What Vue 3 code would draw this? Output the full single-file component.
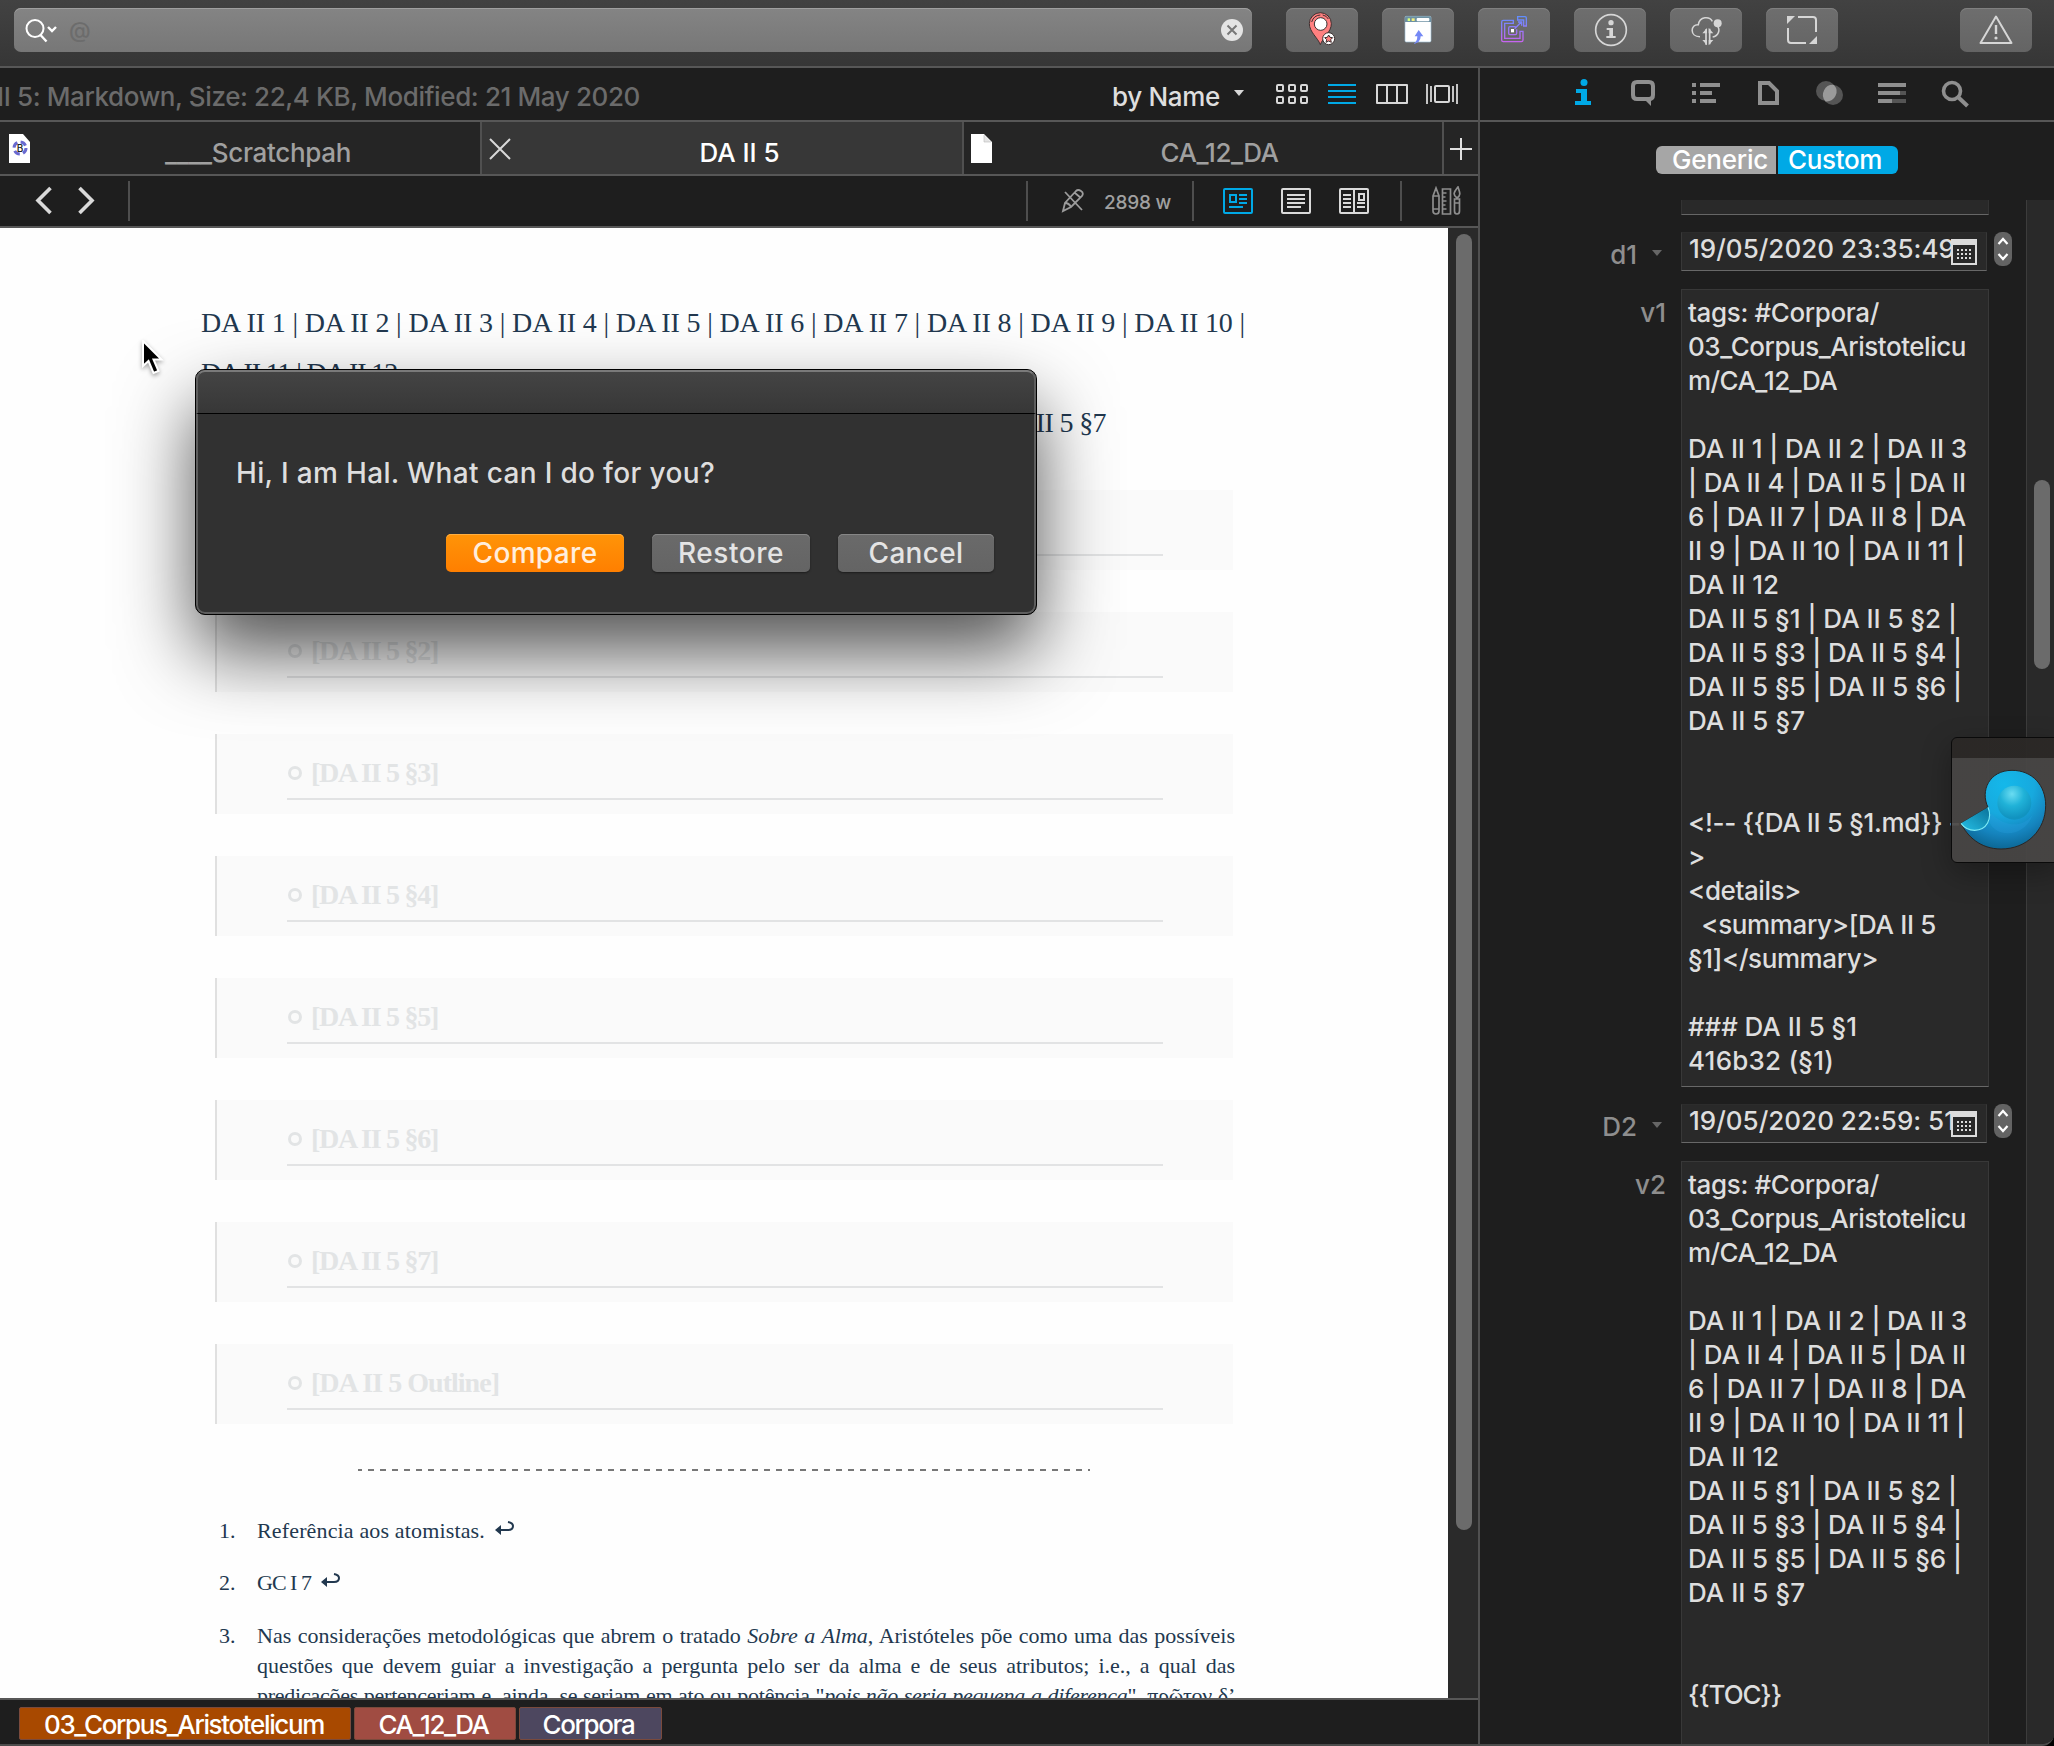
<script setup>
// Spreads the tracking of a text so that it takes up the given width.
const vFit = {
  mounted(el, { value }) {
    if (!value) return
    const count = [...el.textContent].length
    const natural = el.getBoundingClientRect().width
    el.style.letterSpacing = `${((value - natural) / count).toFixed(3)}px`
  },
}

const header = [
  ['tags: #Corpora/', 191],
  ['03_Corpus_Aristotelicu', 278],
  ['m/CA_12_DA', 149],
  ['', 0],
  ['DA II 1 | DA II 2 | DA II 3', 279],
  ['| DA II 4 | DA II 5 | DA II', 278],
  ['6 | DA II 7 | DA II 8 | DA', 278],
  ['II 9 | DA II 10 | DA II 11 |', 277],
  ['DA II 12', 91],
  ['DA II 5 §1 | DA II 5 §2 |', 269],
  ['DA II 5 §3 | DA II 5 §4 |', 274],
  ['DA II 5 §5 | DA II 5 §6 |', 274],
  ['DA II 5 §7', 117],
  ['', 0],
  ['', 0],
]

const records = [
  {
    date: 'd1',
    value: '19/05/2020 23:35:49',
    label: 'v1',
    lines: [
      ...header,
      ['<!-- {{DA II 5 §1.md}} --', 284],
      ['>', 0],
      ['<details>', 113],
      ['  <summary>[DA II 5', 248],
      ['§1]</summary>', 190],
      ['', 0],
      ['### DA II 5 §1', 169],
      ['416b32 (§1)', 146],
    ],
  },
  {
    date: 'D2',
    value: '19/05/2020 22:59: 51',
    label: 'v2',
    lines: [...header, ['{{TOC}}', 93]],
  },
]

const sections = ['§1', '§2', '§3', '§4', '§5', '§6', '§7', 'Outline']
</script>

<template>
  <div class="window">
    <header class="toolbar">
      <div class="search">
        <svg class="glass" width="34" height="26" viewBox="0 0 34 26" fill="none" stroke="#fff">
          <ellipse cx="11" cy="10.500" rx="8.500" ry="8.500" stroke-width="2" />
          <path d="M16.500 17l6 6.500" stroke-width="2.4" />
          <path d="M24 9l4 4 4-4" stroke-width="2.4" />
        </svg>
        <span class="at">@</span>
        <svg class="clear" width="22" height="22" viewBox="0 0 22 22">
          <circle cx="11" cy="11" r="11" fill="#e4e4e4" />
          <path d="M6.5 6.5l9 9M15.5 6.5l-9 9" stroke="#777" stroke-width="2" />
        </svg>
      </div>
      <div class="tool">
        <svg width="72" height="44" viewBox="0 0 216 132">
          <path d="M103 110C96 90 70 72 70 47a33 33 0 0 1 66 0c0 25-26 43-33 63z" fill="#ff8080" stroke="#3c3030" stroke-width="3" />
          <path d="M77 42q6-20 26-21M110 21q12 2 17 12" stroke="#3c3030" stroke-width="3" fill="none" />
          <circle cx="104" cy="48" r="19" fill="#fff" stroke="#3c3030" stroke-width="3" />
          <circle cx="128" cy="92" r="18" fill="#fff" stroke="#3c3030" stroke-width="3" />
          <path d="M128 81l4 7 8 1-6 6 2 8-8-4-8 4 2-8-6-6 8-1z" fill="#ff8080" stroke="#3c3030" stroke-width="3" />
        </svg>
      </div>
      <div class="tool">
        <svg width="72" height="44" viewBox="0 0 216 132">
          <rect x="69" y="25" width="78" height="77" rx="4" fill="#fff" stroke="#9fc0d4" stroke-width="2" />
          <path d="M69 42V29q0-4 4-4h70q4 0 4 4v13z" fill="#6d91a3" />
          <path d="M77 31h7v8h-7z" fill="#d9ff80" />
          <path d="M89 31h9v8h-9z" fill="#f5f080" />
          <rect x="104" y="30" width="38" height="10" rx="3" fill="#fff" />
          <path d="M110 66l14 19h-8q0 20-23 23 13-6 13-23h-8z" fill="#7589f5" />
        </svg>
      </div>
      <div class="tool">
        <svg width="72" height="44" viewBox="0 0 216 132" fill="none" stroke="url(#link)" stroke-width="4">
          <defs>
            <linearGradient id="link" gradientUnits="userSpaceOnUse" x1="0" y1="24" x2="0" y2="102">
              <stop offset="0" stop-color="#5f8fff" />
              <stop offset="1" stop-color="#c864f0" />
            </linearGradient>
          </defs>
          <path d="M106 37H76q-5 0-5 5v54q0 5 5 5h54q5 0 5-5V70h-9v21H80V46h26z" />
          <path d="M113 56H96q-4 0-4 4v16q0 4 4 4h16q4 0 4-4V64M110 62l20-20M120 42h11v11" />
          <path d="M119 26h22q4 0 4 4v24h-8V36h-18z" />
          <path d="M99 63h9v10h-9z" fill="#fff" stroke="none" />
        </svg>
      </div>
      <div class="tool">
        <svg width="72" height="44" viewBox="0 0 216 132">
          <circle cx="111" cy="66" r="46" fill="none" stroke="#d6d6d6" stroke-width="5" />
          <circle cx="111" cy="44" r="8" fill="#d6d6d6" />
          <path d="M98 60h19v24h8v6H97v-6h9V66h-8z" fill="#d6d6d6" />
        </svg>
      </div>
      <div class="tool">
        <svg width="72" height="44" viewBox="0 0 216 132" fill="none" stroke="#d6d6d6" stroke-width="4.5">
          <path d="M90 86c-32 0-29-38-5-36 4-26 34-26 42-10M142 54c10 12 3 30-14 33" />
          <circle cx="143" cy="46" r="12" fill="#d6d6d6" stroke="none" />
          <path d="M108 110V64M119 62v47" stroke-width="5" />
          <path d="M97 76l14-16v16zM130 96l-14 16V96zM97 96l14 16V96zM130 76l-14-16v16z" fill="#d6d6d6" stroke="none" />
        </svg>
      </div>
      <div class="tool">
        <svg width="72" height="44" viewBox="0 0 72 44" fill="none" stroke="#d6d6d6" stroke-width="2">
          <path d="M32 9h15q3 0 3 3v12M40 35H25q-3 0-3-3V20" />
          <path d="M21 16V8h8zM51 28v8h-8z" fill="#d6d6d6" stroke="none" />
        </svg>
      </div>
      <div class="tool last">
        <svg width="72" height="44" viewBox="0 0 72 44" fill="none" stroke="#d6d6d6" stroke-width="2">
          <path d="M36 8.5L51.5 35h-31z" stroke-linejoin="round" />
          <path d="M36 17v9" stroke-width="2.4" />
          <circle cx="36" cy="30" r="1.6" fill="#d6d6d6" stroke="none" />
        </svg>
      </div>
    </header>

    <div class="body">
      <main class="viewer">
        <div class="status">
          <span v-fit="643" class="info">II 5: Markdown, Size: 22,4 KB, Modified: 21 May 2020</span>
          <span v-fit="108" class="sort">by Name</span>
          <svg class="views" width="228" height="26" viewBox="0 0 228 26" fill="none" stroke="#d8d8d8" stroke-width="2">
            <path d="M4 9h10l-5 6z" fill="#d8d8d8" stroke="none" />
            <g>
              <rect x="47" y="4" width="6" height="6" rx="1" /><rect x="59" y="4" width="6" height="6" rx="1" /><rect x="71" y="4" width="6" height="6" rx="1" />
              <rect x="47" y="16" width="6" height="6" rx="1" /><rect x="59" y="16" width="6" height="6" rx="1" /><rect x="71" y="16" width="6" height="6" rx="1" />
            </g>
            <path d="M98 4h28M98 10h28M98 16h28M98 22h28" stroke="#00a9e6" />
            <path d="M147 4h30v18h-30zM157 4v18M167 4v18" stroke-linejoin="round" />
            <path d="M197 3v20M201 5v16M223 5v16M227 3v20" stroke-width="1.8" />
            <rect x="205" y="5" width="14" height="16" rx="1" />
          </svg>
        </div>

        <nav class="tabs">
          <div class="tab first">
            <svg width="24" height="30" viewBox="0 0 24 30">
              <path d="M1 0h14l7 8v21H1z" fill="#fff" />
              <circle cx="12" cy="14" r="6" fill="none" stroke="#6a6ad0" stroke-width="3" stroke-dasharray="6 3.400" />
              <text x="12" y="18" font-size="10" text-anchor="middle" fill="#222">B</text>
            </svg>
            <span v-fit="186" class="name">____Scratchpah</span>
          </div>
          <div class="tab active">
            <svg width="24" height="30" viewBox="0 0 24 30"><path d="M2 5l20 20M22 5L2 25" stroke="#d8d8d8" stroke-width="2" /></svg>
            <span v-fit="80" class="name">DA II 5</span>
          </div>
          <div class="tab third">
            <svg width="24" height="30" viewBox="0 0 24 30"><path d="M1 0h13l8 8v21H1z" fill="#fff" /><path d="M14 1v7h7" fill="#e4e4e4" stroke="#bbb" stroke-width=".6" /></svg>
            <span v-fit="118" class="name">CA_12_DA</span>
          </div>
          <div class="plus">
            <svg width="24" height="24" viewBox="0 0 24 24"><path d="M12 1v22M1 12h22" stroke="#e0e0e0" stroke-width="2" /></svg>
          </div>
        </nav>

        <div class="editbar">
          <svg class="arrows" width="128" height="40" viewBox="0 0 128 40" fill="none" stroke="#dadada" stroke-width="3.6">
            <path d="M50.5 7L38 19.500l12.500 12.500M79.500 7L92 19.500 79.500 32" />
          </svg>
          <i class="rule"></i>
          <i class="rule push"></i>
          <svg class="pen" width="24" height="26" viewBox="0 0 24 26" fill="none" stroke="#9c9c9c" stroke-width="1.8">
            <path d="M2 23l2-8L15 3q2-2 5 0 3 2 1 5L10 19zM4 15q4 0 6 4M14 5l6 5M4 4l17 18" />
          </svg>
          <span v-fit="67" class="words">2898 w</span>
          <i class="rule"></i>
          <svg class="modes" width="146" height="28" viewBox="0 0 146 28" fill="none" stroke="#dadada" stroke-width="2">
            <g stroke="#00a9e6">
              <rect x="1" y="2" width="28" height="24" rx="1" /><rect x="7" y="8" width="6" height="7" />
              <path d="M16 8h8M16 12h8M16 16h8M6 20h14" />
            </g>
            <rect x="59" y="2" width="28" height="24" rx="1" /><path d="M64 8h18M64 12h18M64 16h18M64 20h14" />
            <rect x="117" y="2" width="28" height="24" rx="1" /><path d="M131 2v24M120 8h8M120 12h8M120 16h8M120 20h8M134 16h8M134 20h8" /><rect x="136" y="7" width="5" height="6" />
          </svg>
          <i class="rule"></i>
          <svg class="kit" width="30" height="30" viewBox="0 0 30 30" fill="none" stroke="#8e8e8e" stroke-width="1.7">
            <path d="M2 10l3-8 3 8v15q0 3-3 3t-3-3zM2 10h6M2 23h6M11.500 3h8v25h-8zM11.500 7h4M11.500 11h3M11.500 15h4M11.500 19h3M11.500 23h4" />
            <path d="M26 12c-6-4-1-8 1-11 1 4 4 8-1 11M23.500 13h5v12q0 3-2.500 3t-2.500-3zM23 17h6" />
          </svg>
        </div>

        <div class="pane">
          <article class="page">
            <div class="links">
              <p><span v-fit="1044">DA II 1 | DA II 2 | DA II 3 | DA II 4 | DA II 5 | DA II 6 | DA II 7 | DA II 8 | DA II 9 | DA II 10 |</span></p>
              <p><span v-fit="196">DA II 11 | DA II 12</span></p>
              <p><span v-fit="905">DA II 5 §1 | DA II 5 §2 | DA II 5 §3 | DA II 5 §4 | DA II 5 §5 | DA II 5 §6 | DA II 5 §7</span></p>
            </div>
            <section v-for="s in sections" :key="s" class="fold">
              <div class="summary"><i></i><span v-fit="s === 'Outline' ? 188 : 127">[DA II 5 {{ s }}]</span></div>
            </section>
            <div class="dashes"></div>
            <ol class="notes">
              <li>
                <b>1.</b>
                <div>
                  <span v-fit="228">Referência aos atomistas.</span>
                  <svg width="20" height="16" viewBox="0 0 20 16"><path d="M0 9l6-5v10zM5 8h2v2H5z" fill="#22384f" /><path d="M4 9h9q5 0 5-4 0-3-5-4" fill="none" stroke="#22384f" stroke-width="2" /></svg>
                </div>
              </li>
              <li>
                <b>2.</b>
                <div>
                  <span v-fit="54">GC I 7</span>
                  <svg width="20" height="16" viewBox="0 0 20 16"><path d="M0 9l6-5v10zM5 8h2v2H5z" fill="#22384f" /><path d="M4 9h9q5 0 5-4 0-3-5-4" fill="none" stroke="#22384f" stroke-width="2" /></svg>
                </div>
              </li>
              <li>
                <b>3.</b>
                <div class="para">
                  <p>Nas considerações metodológicas que abrem o tratado <em>Sobre a Alma</em>, Aristóteles põe como uma das possíveis</p>
                  <p>questões que devem guiar a investigação a pergunta pelo ser da alma e de seus atributos; i.e., a qual das</p>
                  <p class="tight">predicações pertenceriam e, ainda, se seriam em ato ou potência "<em>pois não seria pequena a diferença</em>", πρῶτον δ’</p>
                </div>
              </li>
            </ol>
          </article>
          <div class="track"><div class="thumb"></div></div>
        </div>

        <footer class="tags">
          <span class="t1"><em v-fit="280">03_Corpus_Aristotelicum</em></span>
          <span class="t2"><em v-fit="110">CA_12_DA</em></span>
          <span class="t3"><em v-fit="92">Corpora</em></span>
        </footer>
      </main>

      <aside class="inspector">
        <div class="kinds">
          <svg width="62" height="30" viewBox="0 0 62 30" fill="#00a9e6"><circle cx="31" cy="4.500" r="3.500" /><path d="M23 11h11v12h4v4H22v-4h6v-8h-5z" /></svg>
          <svg width="62" height="30" viewBox="0 0 62 30"><path d="M22 4h12q4 0 4 4v9q0 4-4 4H22q-4 0-4-4V8q0-4 4-4z" fill="none" stroke="#8f8f8f" stroke-width="4" /><path d="M29 21h7v7z" fill="#8f8f8f" /></svg>
          <svg width="62" height="30" viewBox="0 0 62 30" stroke="#8f8f8f" stroke-width="4"><path d="M15 7h4M23 7h20M15 15h4M23 15h12M15 23h4M23 23h16" /></svg>
          <svg width="62" height="30" viewBox="0 0 62 30"><path d="M21 5h9l8 8v12H21z" fill="none" stroke="#8f8f8f" stroke-width="4" /></svg>
          <svg width="62" height="30" viewBox="0 0 62 30"><circle cx="25" cy="13" r="10" fill="#555" /><circle cx="32" cy="17" r="10" fill="#555" /><path d="M24.500 23.500A10 10 0 0 1 33 6.900 10 10 0 0 1 24.500 23.500" fill="#9a9a9a" /></svg>
          <svg width="62" height="30" viewBox="0 0 62 30" stroke="#8f8f8f" stroke-width="4"><path d="M15 7h28M15 15h22M15 23h14" /><path d="M37 15h6M29 23h14" stroke="#555" /></svg>
          <svg width="62" height="30" viewBox="0 0 62 30" fill="none" stroke="#8f8f8f"><circle cx="27" cy="13" r="8.500" stroke-width="3.600" /><path d="M33 19l9.500 9" stroke-width="4" /></svg>
        </div>
        <div class="segment">
          <span><em v-fit="96">Generic</em></span>
          <span class="on"><em v-fit="94">Custom</em></span>
        </div>
        <div class="scroll">
          <div class="records">
            <div class="stub"></div>
            <template v-for="r in records" :key="r.label">
              <div class="row date">
                <label>{{ r.date }}<i class="caret"></i></label>
                <div class="field">
                  <span v-fit="266">{{ r.value }}</span>
                  <svg class="cal" width="26" height="26" viewBox="0 0 26 26">
                    <rect x="1" y="1" width="24" height="24" fill="#292929" stroke="#dcdcdc" stroke-width="2" />
                    <path d="M0 0h26v6H0z" fill="#dcdcdc" />
                    <path d="M6 11h15M6 15h15M6 19h15" stroke="#dcdcdc" stroke-width="2" stroke-dasharray="2 2" />
                  </svg>
                </div>
                <svg class="stepper" width="18" height="34" viewBox="0 0 18 34">
                  <rect width="18" height="34" rx="8" fill="#636363" />
                  <path d="M4.500 12L9 7l4.500 5M4.500 22L9 27l4.500-5" fill="none" stroke="#fff" stroke-width="2.200" />
                </svg>
              </div>
              <div class="row text">
                <label>{{ r.label }}</label>
                <div class="field">
                  <div v-for="(l, i) in r.lines" :key="i" class="line"><span v-fit="l[1]">{{ l[0] }}</span></div>
                </div>
              </div>
            </template>
          </div>
          <div class="track"><div class="thumb"></div></div>
        </div>
      </aside>
    </div>

    <div class="dialog">
      <div class="bar"></div>
      <p><span v-fit="479">Hi, I am Hal. What can I do for you?</span></p>
      <div class="actions">
        <button class="primary"><span v-fit="125">Compare</span></button>
        <button class="b2"><span v-fit="106">Restore</span></button>
        <button class="b3"><span v-fit="95">Cancel</span></button>
      </div>
    </div>

    <div class="dock">
      <svg width="103" height="126" viewBox="35 37 309 378">
        <defs>
          <radialGradient id="outer" gradientUnits="userSpaceOnUse" cx="195" cy="180" r="200">
            <stop offset="0" stop-color="#14b8ea" /><stop offset=".45" stop-color="#17a9de" /><stop offset=".75" stop-color="#1583bd" /><stop offset="1" stop-color="#0b638f" />
          </radialGradient>
          <radialGradient id="inner" gradientUnits="userSpaceOnUse" cx="218" cy="208" r="72">
            <stop offset="0" stop-color="#6adcf2" /><stop offset=".5" stop-color="#20b2d8" /><stop offset="1" stop-color="#1193c0" />
          </radialGradient>
          <linearGradient id="mouth" x1="1" y1="0" x2="0" y2="1">
            <stop offset="0" stop-color="#0a7299" /><stop offset="1" stop-color="#25bfe6" />
          </linearGradient>
        </defs>
        <path d="M65 296L146 248C122 198 150 137 218 137c62 0 101 46 101 105 0 74-56 131-134 131-62 0-101-38-120-77z" fill="url(#outer)" stroke="#2a2624" stroke-width="3" />
        <path d="M150 292c22 50 106 46 130-22-25 34-76 45-126-5z" fill="#2a9fe0" opacity=".3" />
        <circle cx="225" cy="234" r="51" fill="url(#inner)" />
        <path d="M65 296L146 248c14 34-4 68-40 69-20 0-33-10-41-21z" fill="url(#mouth)" />
        <path d="M146 248c14 34-4 68-40 69-20 0-33-10-41-21" fill="none" stroke="#7deaf4" stroke-width="3.500" />
      </svg>
    </div>

    <svg class="cursor" width="26" height="36" viewBox="0 0 26 36">
      <path d="M2 1v25l5.500-5 5 12 5-2-5-11.500h8z" fill="#000" stroke="#fff" stroke-width="2" />
    </svg>
  </div>
</template>

<style>
html,
body {
  margin: 0;
  background: #000;
}
</style>

<style scoped>
.window {
  position: relative;
  display: flex;
  flex-direction: column;
  box-sizing: border-box;
  width: 2054px;
  height: 1746px;
  overflow: hidden;
  border-bottom: 2px solid #4c4c4c;
  border-bottom-right-radius: 12px;
  background: #1e1e1e;
  color: #dedede;
  font: 450 26px/34px Inter, "Liberation Sans", sans-serif;
}
.window * { box-sizing: border-box; }
svg { display: block; flex: none; }
span, em { white-space: pre; }
p { margin: 0; }
.toolbar {
  display: flex;
  flex: none;
  height: 68px;
  padding: 8px 22px 0 14px;
  gap: 24px;
  border-bottom: 2px solid #575757;
  background: linear-gradient(#424242, #363636);
}
.search {
  display: flex;
  align-items: center;
  width: 1238px;
  height: 44px;
  margin-right: 10px;
  padding: 0 9px 0 10px;
  border-radius: 7px;
  background: linear-gradient(#848484, #777);
  box-shadow: inset 0 1px #a0a0a0;
}
.glass { margin-top: 2px; }
.at { margin-left: 11px; color: #6c6c6c; font-size: 22px; }
.clear { margin-left: auto; }
.tool {
  width: 72px;
  height: 44px;
  border-radius: 7px;
  background: linear-gradient(#6e6e6e, #646464);
  box-shadow: inset 0 1px #808080;
}
.last { margin-left: auto; }
.body { display: flex; flex: 1; min-height: 0; }
.viewer {
  display: flex;
  flex-direction: column;
  width: 1480px;
  border-right: 2px solid #505050;
}
.status {
  display: flex;
  flex: none;
  align-items: center;
  height: 54px;
  border-bottom: 2px solid #575757;
}
.info { margin: 5px 0 0 -3px; color: #6b6b6b; }
.sort { margin: 5px 0 0 auto; }
.views { margin: 0 20px 0 10px; }
.tabs {
  display: flex;
  flex: none;
  height: 54px;
  border-bottom: 2px solid #575757;
  background: #252525;
}
.tab {
  position: relative;
  display: flex;
  justify-content: center;
  width: 482px;
  padding-top: 14px;
  border-right: 2px solid #505050;
  color: #a0a0a0;
}
.first { padding-left: 36px; }
.third { width: 480px; padding-left: 33px; }
.tab svg { position: absolute; left: 8px; top: 12px; }
.tab.third svg { left: 6px; }
.tab .name { line-height: 34px; }
.active { background: #373737; color: #fff; padding-left: 35px; }
.active svg { left: 6px; }
.plus { padding: 15px 0 0 5px; }
.editbar {
  display: flex;
  flex: none;
  align-items: center;
  height: 52px;
  border-bottom: 2px solid #575757;
}
.rule { width: 2px; height: 40px; background: #4e4e4e; }
.push { margin-left: 896px; }
.pen { margin-left: 33px; }
.words { margin: 4px 21px 0 19px; color: #a0a0a0; font-size: 19px; }
.modes { margin: 0 31px 0 29px; }
.kit { margin-left: 29px; }
.pane { display: flex; flex: 1; min-height: 0; overflow: hidden; }
.page {
  width: 1448px;
  padding: 70px 0 0 200px;
  overflow: hidden;
  background: #fefefe;
  color: #22384f;
  font: 28px/50px "Liberation Serif", serif;
}
.links { height: 192px; padding-left: 1px; }
.fold {
  width: 1018px;
  height: 80px;
  margin: 0 0 42px 15px;
  padding: 22px 70px 0 70px;
  border-left: 2px solid #e0e0e0;
  background: #fafafa;
}
.summary {
  display: flex;
  height: 44px;
  border-bottom: 2px solid #e2e3e4;
  color: #e2e4e5;
  font-weight: bold;
  line-height: 34px;
}
.summary i {
  width: 14px;
  height: 14px;
  margin: 10px 9px 0 1px;
  border: 3px solid #e2e4e5;
  border-radius: 50%;
}
.dashes {
  width: 732px;
  height: 2px;
  margin: 45px 0 0 158px;
  background: repeating-linear-gradient(90deg, #777 0 4px, transparent 4px 10px, #777 10px 12px);
}
.notes { margin: 44.600px 0 0; padding: 0 0 0 19px; list-style: none; font-size: 22px; line-height: 30px; }
.notes li { display: flex; margin-bottom: 22.500px; }
.notes b { width: 38px; font-weight: normal; }
.notes li > div { display: flex; }
.notes svg { margin: 5px 0 0 10px; }
.notes li > .para { display: block; width: 978px; }
.para p { text-align: justify; text-align-last: justify; white-space: nowrap; }
.para em { white-space: nowrap; }
.para .tight { letter-spacing: -.25px; }
.viewer .track { width: 30px; padding: 6px 0 0 8px; background: #2a2a2a; }
.viewer .thumb { width: 16px; height: 1296px; border-radius: 8px; background: #6b6b6b; }
.tags {
  display: flex;
  flex: none;
  height: 46px;
  padding: 7px 0 0 19px;
  gap: 3px;
  border-top: 2px solid #575757;
}
.tags span {
  height: 33px;
  border: 1px solid #7a4a3c;
  border-radius: 2px;
  color: #fff;
  font-weight: 500;
  line-height: 34px;
  text-align: center;
}
em { font-style: normal; }
.para em { font-style: italic; }
.tags .t1 { width: 332px; padding-right: 2px; background: #a84900; }
.tags .t2 { width: 162px; padding-right: 3px; background: #a04c42; }
.tags .t3 { width: 143px; padding-right: 4px; background: #4d475f; }
.inspector { display: flex; flex: 1; flex-direction: column; }
.kinds {
  display: flex;
  flex: none;
  height: 54px;
  padding: 10px 0 0 73px;
  border-bottom: 2px solid #575757;
}
.segment { display: flex; flex: none; gap: 2px; margin: 24px 0 26px 176px; }
.segment span {
  width: 120px;
  height: 28px;
  padding-left: 16px;
  border-radius: 6px 0 0 6px;
  background: #a6a6a6;
  color: #fff;
  font-weight: 500;
  line-height: 28px;
}
.segment .on { padding-left: 10px; border-radius: 0 6px 6px 0; background: #00a9e6; }
.scroll { display: flex; flex: 1; min-height: 0; overflow: hidden; }
.records { width: 546px; }
.stub { width: 308px; height: 15px; margin-left: 201px; border: 1px solid #333; border-top: 0; border-bottom-color: #666; background: #292929; }
.row { display: flex; }
.row label { display: flex; justify-content: flex-end; width: 186px; margin-right: 15px; color: #8e8e8e; }
.field { border: 1px solid #383838; border-bottom: 1px solid #686868; background: #292929; color: #dedede; }
.date { height: 39px; margin-top: 17px; }
.date label { padding-top: 6px; }
.caret { width: 10px; height: 6px; margin: 12px 4px 0 15px; background: #666; clip-path: polygon(0 0, 100% 0, 50% 100%); }
.date .field { position: relative; width: 306px; height: 39px; padding-left: 7px; border-top-color: #2c2c2c; line-height: 32px; }
.cal { position: absolute; left: 269px; top: 6px; }
.stepper { margin-left: 7px; }
.text { margin-top: 18px; }
.text label { padding-top: 7px; }
.text .field { width: 308px; height: 798px; padding: 6px 0 0 6px; }
.line { height: 34px; }
.inspector .track { width: 28px; padding: 280px 0 0 7px; border-left: 1px solid #3c3c3c; background: #292929; }
.inspector .thumb { width: 16px; height: 189px; border-radius: 8px; background: #6b6b6b; }
.dialog {
  position: absolute;
  left: 195px;
  top: 369px;
  width: 842px;
  height: 246px;
  border: 1px solid #000;
  border-radius: 10px;
  background: #313131;
  box-shadow: inset 0 0 0 2px #5e5e5e, 0 36px 76px rgba(0, 0, 0, .68);
  font-size: 28px;
}
.dialog .bar {
  height: 44px;
  border: 2px solid #5e5e5e;
  border-top-color: #7a7a7a;
  border-bottom: 1px solid #000;
  border-radius: 9px 9px 0 0;
  background: linear-gradient(#444, #373737);
}
.dialog p { margin: 42px 0 0 40px; line-height: 34px; }
.actions { display: flex; margin: 44px 0 0 250px; }
button {
  height: 38px;
  padding: 0;
  border: 0;
  border-radius: 5px;
  background: linear-gradient(#6a6a6a, #646464);
  box-shadow: inset 0 1px #868686, 0 1px 2px #1c1c1c;
  color: #e4e4e4;
  font: inherit;
}
.primary { width: 178px; margin-right: 28px; background: linear-gradient(#ff9408, #ff7f00); box-shadow: inset 0 1px #ffae40; color: #ffeedd; }
.b2 { width: 158px; margin-right: 28px; }
.b3 { width: 156px; }
.dock {
  position: absolute;
  left: 1951px;
  top: 737px;
  width: 110px;
  height: 126px;
  overflow: hidden;
  border: 1px solid #0a0a0a;
  border-radius: 6px;
  background: linear-gradient(rgba(43, 40, 38, .95) 0 20px, rgba(72, 70, 69, .93) 20px);
  box-shadow: 0 10px 30px rgba(0, 0, 0, .3);
}
.dock svg { margin: -1px; }
.cursor { position: absolute; left: 141px; top: 340px; filter: drop-shadow(0 2px 2px rgba(0, 0, 0, .35)); }
</style>
